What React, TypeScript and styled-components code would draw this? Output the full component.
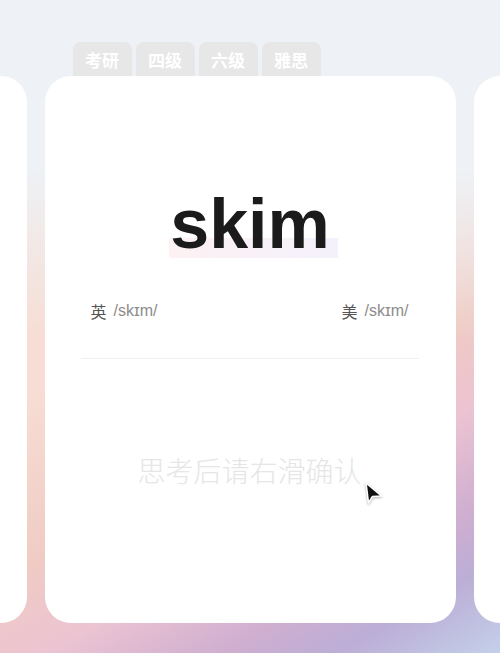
import React from "react";
import styled, { createGlobalStyle } from "styled-components";

const GlobalStyle = createGlobalStyle`
  html, body {
    margin: 0;
    padding: 0;
  }
  body {
    font-family: "Liberation Sans", "Noto Sans CJK SC", sans-serif;
  }
  * {
    box-sizing: border-box;
  }
`;

const tags = ["考研", "四级", "六级", "雅思"];

const App = () => {
  return (
    <Page>
      <GlobalStyle />
      <Carousel>
        <Slot>
          <TabRow />
          <Card />
        </Slot>
        <Slot>
          <TabRow>
            {tags.map((t) => (
              <Tab key={t}>{t}</Tab>
            ))}
          </TabRow>
          <Card>
            <Word>skim</Word>
            <PhoneticRow>
              <Phonetic>
                <Region>英</Region>
                <Ipa>/skɪm/</Ipa>
              </Phonetic>
              <Phonetic>
                <Region>美</Region>
                <Ipa>/skɪm/</Ipa>
              </Phonetic>
            </PhoneticRow>
            <Divider />
            <Hint>思考后请右滑确认</Hint>
            <Cursor width="20" height="24" viewBox="0 0 20 24">
              <path
                d="M2 2 L4.5 22 L8.5 15.5 L17.5 15 Z"
                fill="#111"
                stroke="#fff"
                strokeWidth="1.6"
                strokeLinejoin="round"
              />
            </Cursor>
          </Card>
        </Slot>
        <Slot>
          <TabRow />
          <Card />
        </Slot>
      </Carousel>
    </Page>
  );
};

export default App;

const Page = styled.div`
  width: 100%;
  height: 653px;
  overflow: hidden;
  padding-top: 42px;
  background:
    linear-gradient(to bottom, #eef1f5 0px, #eef1f5 170px, rgba(238, 241, 245, 0) 340px),
    linear-gradient(
      150deg,
      #f7ddd3 0%,
      #f7ddd3 44%,
      #efcbc3 62%,
      #ecc4d2 72%,
      #cfaed0 83%,
      #bcaed6 90%,
      #c3d0ea 100%
    );
`;

const Carousel = styled.div`
  display: flex;
  justify-content: center;
  gap: 18px;
`;

const Slot = styled.div`
  flex: 0 0 411px;
  display: flex;
  flex-direction: column;
`;

const TabRow = styled.div`
  height: 34px;
  display: flex;
  gap: 4px;
  padding-left: 28px;
`;

const Tab = styled.div`
  width: 59px;
  height: 34px;
  display: flex;
  align-items: center;
  justify-content: center;
  background: #e7e7e8;
  border-radius: 8px 8px 0 0;
  color: #ffffff;
  font-family: "Noto Sans CJK SC", sans-serif;
  font-size: 17px;
  font-weight: 700;
`;

const Card = styled.div`
  position: relative;
  height: 547px;
  background: #ffffff;
  border-radius: 26px;
  padding: 108px 37px 0 36px;
  display: flex;
  flex-direction: column;
  align-items: center;
`;

const Word = styled.div`
  position: relative;
  z-index: 0;
  font-family: "Liberation Sans", Arial, sans-serif;
  font-weight: 700;
  font-size: 70px;
  line-height: 80px;
  color: #1b1b1b;
  margin-left: 1px;

  &::after {
    content: "";
    position: absolute;
    z-index: -1;
    left: -1px;
    right: -8px;
    bottom: 6px;
    height: 20px;
    background: linear-gradient(to right, #fdf1f3, #f4f1fc);
  }
`;

const PhoneticRow = styled.div`
  width: 100%;
  margin-top: 36px;
  padding: 0 10px;
  display: flex;
  justify-content: space-between;
  align-items: center;
`;

const Phonetic = styled.div`
  display: flex;
  align-items: center;
  gap: 7px;
  height: 22px;
`;

const Region = styled.span`
  font-family: "Noto Sans CJK SC", sans-serif;
  font-size: 16px;
  color: #555555;
`;

const Ipa = styled.span`
  font-family: "Liberation Sans", Arial, sans-serif;
  font-size: 16px;
  color: #8c8c8c;
`;

const Divider = styled.div`
  width: 100%;
  height: 1px;
  margin-top: 36px;
  background: #f1f1f1;
`;

const Hint = styled.div`
  margin-top: 92px;
  font-family: "Noto Sans CJK SC", sans-serif;
  font-size: 28px;
  line-height: 38px;
  color: #e6e6e6;
  font-weight: 300;
`;

const Cursor = styled.svg`
  position: absolute;
  left: 319px;
  top: 405px;
  filter: drop-shadow(0 1px 1px rgba(0, 0, 0, 0.3));
`;
